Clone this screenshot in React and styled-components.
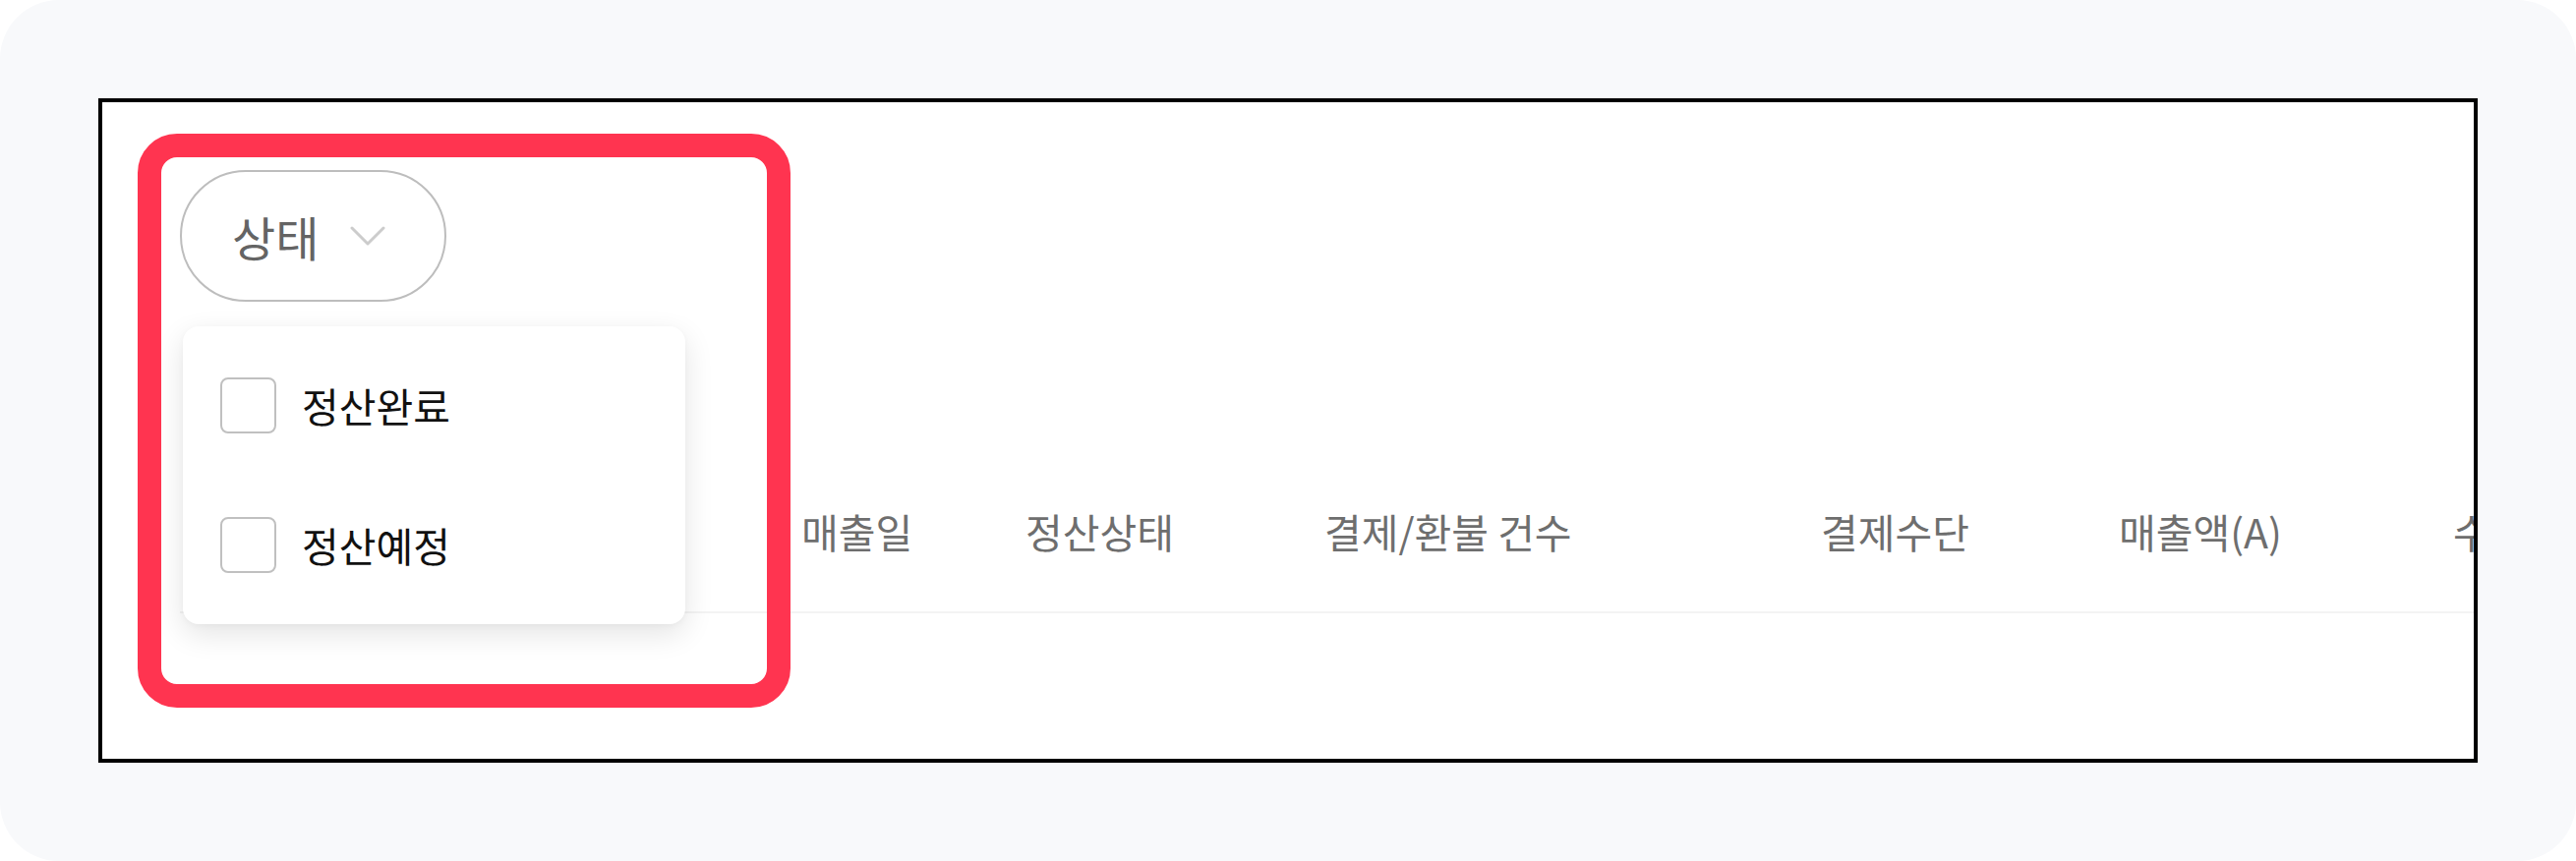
import React from 'react';
import styled, { createGlobalStyle } from 'styled-components';

const GlobalStyle = createGlobalStyle`
  html, body {
    margin: 0;
    padding: 0;
    background: #ffffff;
  }
  body {
    font-family: "Noto Sans CJK KR", "Noto Sans", sans-serif;
  }
  * { box-sizing: border-box; }
`;

const Page = styled.div`
  width: 2620px;
  height: 876px;
  background: #f8f9fb;
  border-radius: 60px;
  padding: 100px;
`;

const Frame = styled.div`
  position: relative;
  height: 100%;
  border: 4px solid #000;
  background: #fff;
  overflow: hidden;
  padding: 69px 0 0 79px;
`;

const FilterBar = styled.div`
  position: relative;
  display: inline-block;
  vertical-align: top;
`;

const Pill = styled.button`
  display: flex;
  align-items: center;
  gap: 32px;
  width: 271px;
  height: 134px;
  padding: 0 0 0 51px;
  border: 2px solid #bdbdbd;
  border-radius: 67px;
  background: #fff;
  font-family: "Noto Sans CJK KR", sans-serif;
  font-size: 48px;
  font-weight: 400;
  letter-spacing: 0;
  color: #646464;
  line-height: 1;
  cursor: pointer;
`;

const Chevron = styled.svg`
  width: 36px;
  height: 20px;
  flex-shrink: 0;
`;

const Dropdown = styled.div`
  position: absolute;
  top: calc(100% + 25px);
  left: 3px;
  width: 511px;
  padding: 9px 0 10px;
  background: #fff;
  border-radius: 16px;
  box-shadow: 0 10px 30px rgba(0, 0, 0, 0.11), 0 2px 6px rgba(0, 0, 0, 0.03);
  z-index: 2;
`;

const Option = styled.label`
  display: flex;
  align-items: center;
  gap: 26px;
  height: 142px;
  padding-left: 38px;
  cursor: pointer;
`;

const Box = styled.span`
  width: 57px;
  height: 57px;
  flex-shrink: 0;
  border: 2px solid #c0c0c0;
  border-radius: 8px;
  background: #fff;
`;

const OptionText = styled.span`
  font-size: 41px;
  letter-spacing: 0;
  color: #111;
  line-height: 1;
`;

const Table = styled.div`
  margin-top: 152px;
`;

const HeaderRow = styled.div`
  display: flex;
  align-items: center;
  height: 165px;
  border-bottom: 2px solid #f3f3f3;
`;

const HeadCell = styled.div`
  flex: 0 0 ${(p) => p.$w}px;
  font-size: 41px;
  letter-spacing: 0;
  color: #6e6e6e;
  line-height: 1;
  white-space: nowrap;
`;

const Highlight = styled.div`
  position: absolute;
  left: 36px;
  top: 32px;
  width: 664px;
  height: 584px;
  border: 24px solid #ff3450;
  border-radius: 40px;
  pointer-events: none;
  z-index: 3;
`;

const columns = [
  { label: '', w: 632 },
  { label: '매출일', w: 228 },
  { label: '정산상태', w: 304 },
  { label: '결제/환불 건수', w: 505 },
  { label: '결제수단', w: 303 },
  { label: '매출액(A)', w: 340 },
  { label: '수수료(B)', w: 300 },
  { label: '정산금액', w: 300 },
];

const options = ['정산완료', '정산예정'];

export default function App() {
  return (
    <>
      <GlobalStyle />
      <Page>
        <Frame>
          <FilterBar>
            <Pill type="button">
              <span>상태</span>
              <Chevron viewBox="0 0 36 20" fill="none">
                <polyline
                  points="2,2 18,18 34,2"
                  stroke="#cccccc"
                  strokeWidth="3"
                  strokeLinecap="round"
                  strokeLinejoin="round"
                />
              </Chevron>
            </Pill>
            <Dropdown>
              {options.map((o) => (
                <Option key={o}>
                  <Box />
                  <OptionText>{o}</OptionText>
                </Option>
              ))}
            </Dropdown>
          </FilterBar>
          <Table>
            <HeaderRow>
              {columns.map((c, i) => (
                <HeadCell key={i} $w={c.w}>
                  {c.label}
                </HeadCell>
              ))}
            </HeaderRow>
          </Table>
          <Highlight />
        </Frame>
      </Page>
    </>
  );
}
